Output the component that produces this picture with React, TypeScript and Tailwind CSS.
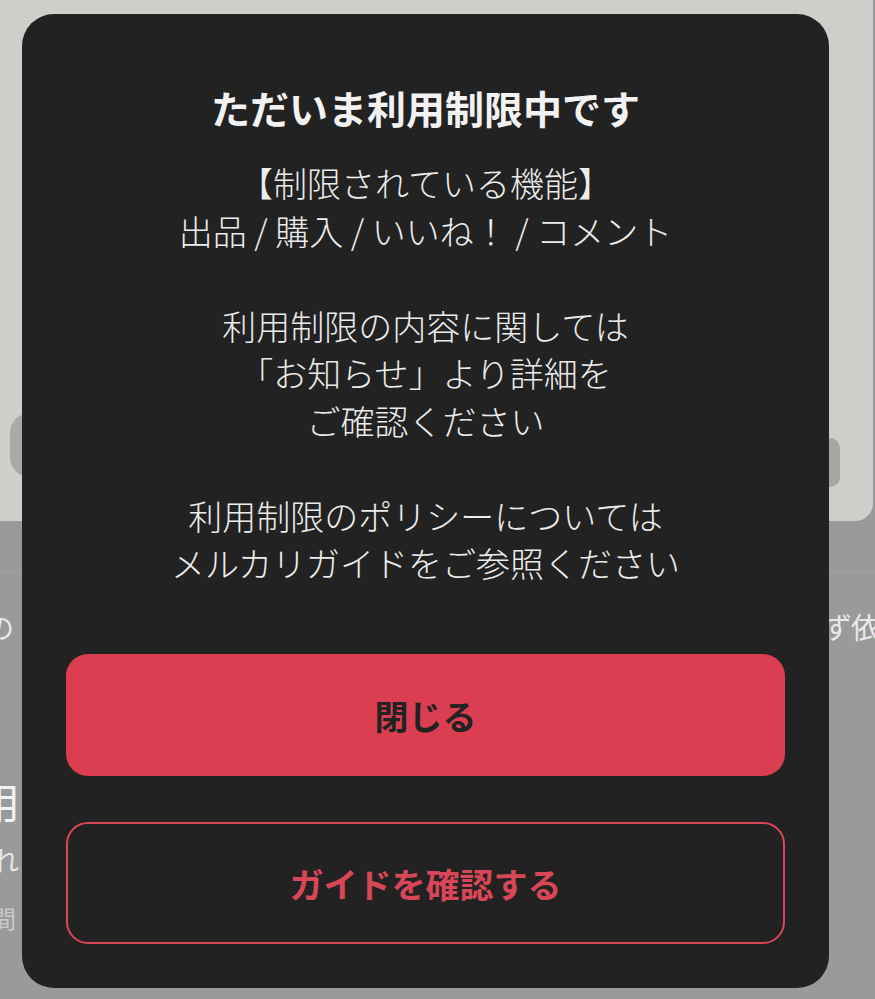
const font = "font-['Noto_Sans_CJK_JP','Noto_Sans',sans-serif]";

const App = () => {
  return (
    <div className={`relative w-[875px] h-[999px] overflow-hidden bg-[#9a9a9a] ${font}`}>
      {/* dimmed page behind the dialog */}
      <div className="flex flex-col">
        <div className="h-[521px] w-[873px] bg-[#cececb] rounded-br-[18px] flex flex-row justify-between items-start">
          <div className="mt-[413px] ml-[10px] w-[40px] h-[64px] rounded-full bg-[#a9a9a7]" />
          <div className="mt-[438px] mr-[33px] w-[40px] h-[49px] rounded-[10px] bg-[#a6a6a4]" />
        </div>
        <div className="h-[51px] border-b border-[#a3a3a3]" />
        <div className="flex flex-row justify-between items-center mt-[35px] h-[40px]">
          <span className="ml-[-14px] text-[28px] text-[#e9e9e9]">の</span>
          <span className="mr-[-4px] text-[29px] tracking-[-1px] text-[#e9e9e9]">ず依</span>
        </div>
        <div className="mt-[130px] ml-[-22px] text-[42px] leading-[48px] text-[#f2f2f2]">用</div>
        <div className="mt-[18px] ml-[-8px] text-[27px] leading-[34px] text-[#e6e6e6]">れ</div>
        <div className="mt-[26px] ml-[-8px] text-[24px] leading-[30px] text-[#c9c9c9]">間</div>
      </div>

      {/* dialog */}
      <div className="absolute left-[22px] top-[14px] w-[807px] h-[974px] rounded-[32px] bg-[#222222] px-[44px] pt-[66px] pb-[44px] flex flex-col">
        <h1 className="text-center text-[39px] leading-[54px] font-bold text-[#f2f2f2]">ただいま利用制限中です</h1>
        <div className="mt-[25px] text-center text-[34px] leading-[47.5px] font-light text-[#ececec]">
          <p>【制限されている機能】</p>
          <p>出品 / 購入 / いいね！ / コメント</p>
          <p>&nbsp;</p>
          <p>利用制限の内容に関しては</p>
          <p>「お知らせ」より詳細を</p>
          <p>ご確認ください</p>
          <p>&nbsp;</p>
          <p>利用制限のポリシーについては</p>
          <p>メルカリガイドをご参照ください</p>
        </div>
        <div className="mt-auto flex flex-col gap-[46px]">
          <button className="h-[122px] w-full rounded-[22px] bg-[#da3e50] text-[34px] font-bold text-[#222222]">
            閉じる
          </button>
          <button className="h-[122px] w-full rounded-[22px] border-2 border-[#d94657] text-[34px] font-bold text-[#d94657]">
            ガイドを確認する
          </button>
        </div>
      </div>
    </div>
  );
};

export default App;
